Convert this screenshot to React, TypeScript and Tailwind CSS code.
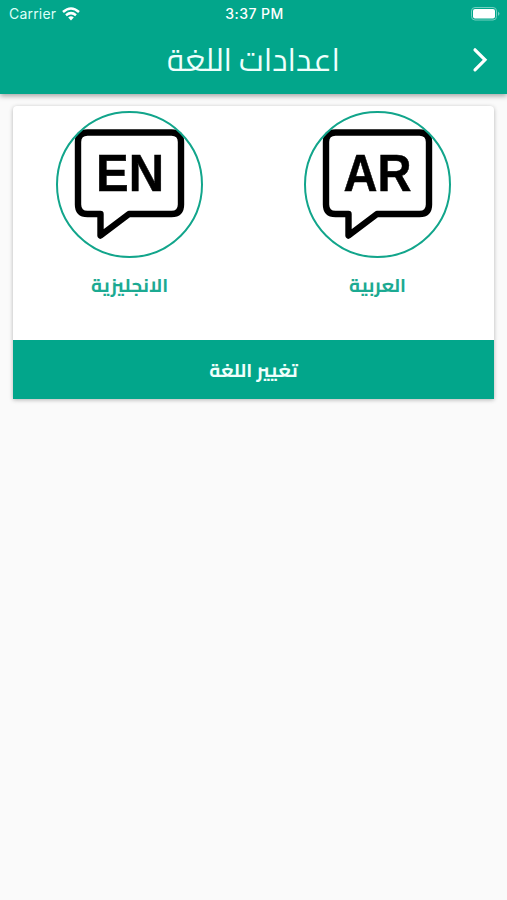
type LanguageProps = { code: string; label: string; codeX: number; codeWidth: number };

function Language({ code, label, codeX, codeWidth }: LanguageProps) {
  return (
    <div className="flex w-[147px] flex-col items-center">
      <svg className="h-[147px] w-[147px] [direction:ltr]" viewBox="0 0 147 147" fill="none">
        <path
          d="M31.5 21.5H115.5Q125 21.5 125 31V93.5Q125 103 115.5 103H73L44.5 124.5V103H31.5Q22 103 22 93.5V31Q22 21.5 31.5 21.5Z"
          stroke="#000"
          strokeWidth="6.4"
          strokeLinejoin="round"
        />
        <text
          x={codeX}
          y="79.8"
          fontSize="51"
          fontWeight="700"
          textLength={codeWidth}
          lengthAdjust="spacingAndGlyphs"
          fill="#000"
          stroke="#000"
          strokeWidth="0.5"
          className="font-['Liberation_Sans',sans-serif]"
        >
          {code}
        </text>
        <circle cx="73.5" cy="73.5" r="72.5" stroke="#12a58b" strokeWidth="2" />
      </svg>
      <span className="mt-[9px] text-[19px] leading-9 font-bold text-[#1caa92]">{label}</span>
    </div>
  );
}

export default function App() {
  return (
    <div dir="rtl" className="flex h-[900px] w-[507px] flex-col bg-[#fafafa] font-['Cairo','Noto_Kufi_Arabic','DejaVu_Sans',sans-serif]">
      <header className="h-[94px] bg-[#02a68b] text-white shadow-[0_2px_5px_rgba(0,0,0,0.35)]">
        <div dir="ltr" className="grid h-7 grid-cols-3 items-center pl-[9px] pr-[7px] font-['Inter',sans-serif] text-[14px]">
          <div className="flex items-center gap-1.5 pb-px">
            <span className="tracking-[0.2px] text-[#ddfff8]">Carrier</span>
            <svg className="h-[14px] w-[18px]" viewBox="0 0 18 14" fill="none" stroke="white" strokeWidth="2.5">
              <path d="M1 5Q9 -2 17 5M4 8.2Q9 4 14 8.2" />
              <path d="M6.2 10.4Q9 8 11.8 10.4L9 13.5Z" fill="white" stroke="none" />
            </svg>
          </div>
          <span className="pb-px text-center text-[14px] font-medium tracking-[0.45px]">3:37 PM</span>
          <svg className="h-[14px] w-[29px] justify-self-end" viewBox="0 0 29 14">
            <rect x="0.5" y="0.5" width="25" height="12.5" rx="3.5" fill="none" stroke="#72d0c0" />
            <rect x="2" y="2" width="22" height="9.5" rx="2" fill="white" />
            <path d="M27 4.5Q30 6.8 27 9Z" fill="#72d0c0" />
          </svg>
        </div>
        <div className="grid h-[64px] grid-cols-[54px_1fr_54px] items-center">
          <svg className="h-[26px] w-[54px]" viewBox="0 0 54 26" fill="none" stroke="white" strokeWidth="3.2" strokeLinecap="round">
            <path d="M22 2.8L32 12.8L22 22.8" />
          </svg>
          <h1 className="text-center text-[31.5px] leading-[60px] font-[380] text-[#effffc]">اعدادات اللغة</h1>
        </div>
      </header>
      <main className="mx-[13px] mt-3 flex h-[293px] flex-col overflow-hidden rounded-t-[4px] bg-white shadow-[0_1px_4px_rgba(0,0,0,0.28)]">
        <div className="flex flex-1 justify-between px-[43px] pt-[5px]">
          <Language code="AR" label="العربية" codeX={39.5} codeWidth={68} />
          <Language code="EN" label="الانجليزية" codeX={40} codeWidth={68} />
        </div>
        <button type="button" className="h-[59px] bg-[#02a68b] pt-0.5 text-[19px] font-bold text-[#effffc]">
          تغيير اللغة
        </button>
      </main>
    </div>
  );
}
